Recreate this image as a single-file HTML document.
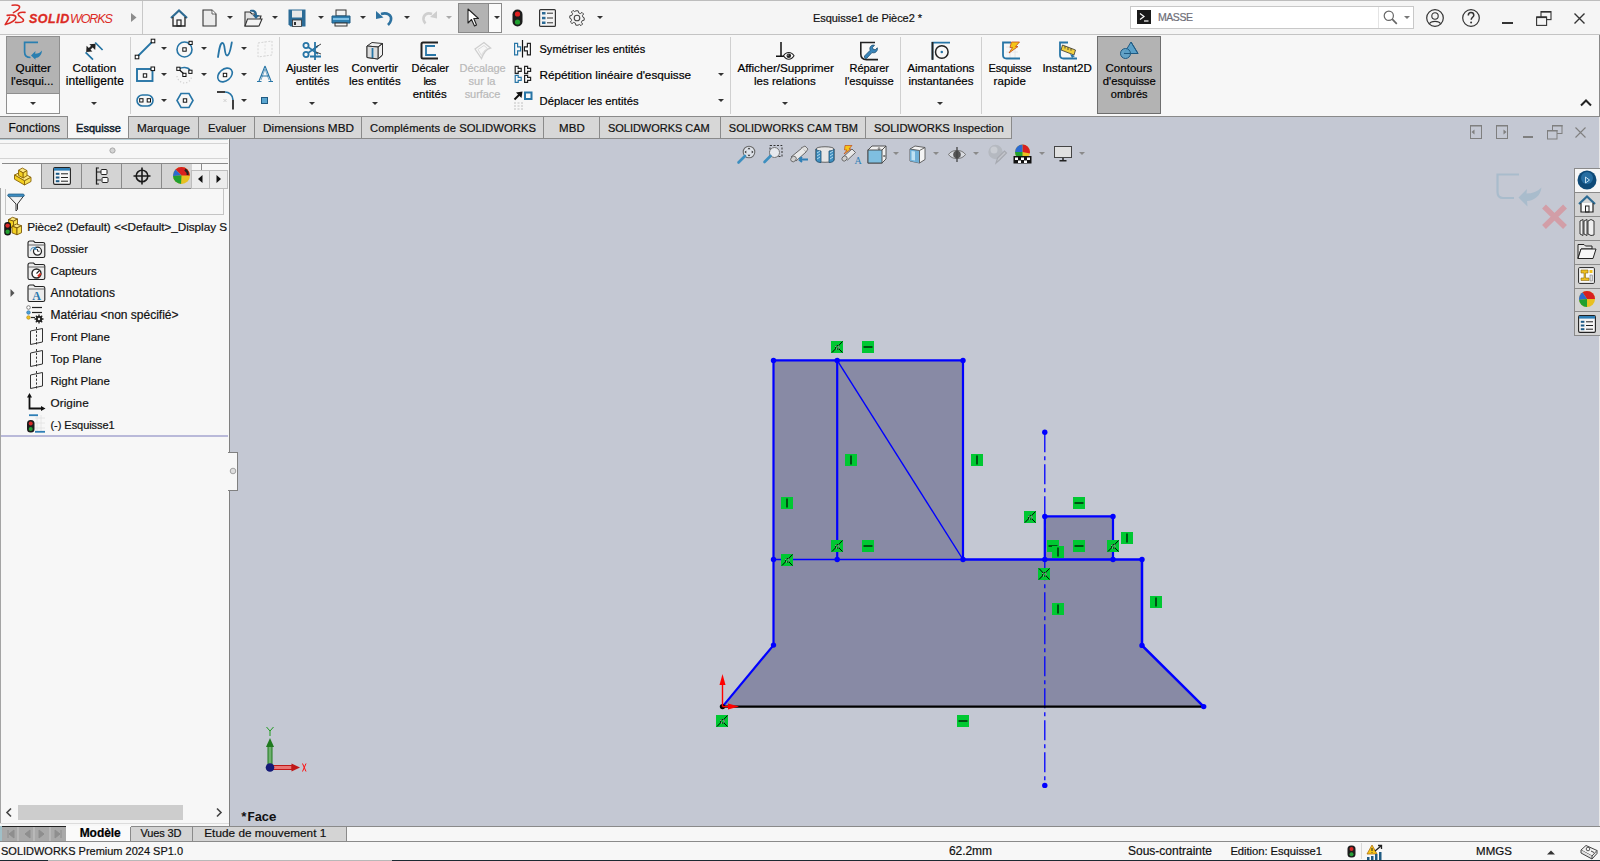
<!DOCTYPE html>
<html><head><meta charset="utf-8">
<style>
*{margin:0;padding:0;box-sizing:border-box}
html,body{width:1600px;height:861px;overflow:hidden;background:#f7f7f7;font-family:"Liberation Sans",sans-serif;font-size:12px;color:#000}
.a{position:absolute}
.t{position:absolute;white-space:nowrap;line-height:13px}
.c{text-align:center}
svg{position:absolute;overflow:visible}
.dd{position:absolute;width:0;height:0;border-left:3px solid transparent;border-right:3px solid transparent;border-top:3px solid #333}
.vs{position:absolute;width:1px;background:#c8c8c8}
.tab{position:absolute;top:116px;height:22px;background:#d7d7d7;border-left:1px solid #8a8a8a;border-right:1px solid #8a8a8a;border-top:1px solid #8a8a8a;line-height:20px;text-align:center;white-space:nowrap;color:#111}
.ft{position:absolute;left:50px;white-space:nowrap;line-height:14px;font-size:12px;color:#111}
.rel{position:absolute;width:12px;height:12px;background:#0fcc3a}
</style></head><body>

<!-- top border -->
<div class="a" style="left:0;top:0;width:1600px;height:1px;background:#bdbdbd"></div>
<!-- title bar -->
<div class="a" style="left:0;top:1px;width:1600px;height:33px;background:#f5f5f5"></div>
<div class="a" style="left:0;top:34px;width:1600px;height:1px;background:#c4c4c4"></div>
<div class="a" style="left:142px;top:1px;width:1px;height:33px;background:#c8c8c8"></div>

<!-- ribbon -->
<div class="a" style="left:0;top:35px;width:1600px;height:81px;background:#f7f7f7"></div>
<div class="a" style="left:0;top:116px;width:1600px;height:1px;background:#8a8a8a"></div>
<div class="a" style="left:1599px;top:35px;width:1px;height:82px;background:#8a8a8a"></div>

<!-- tab row background (viewport color) -->
<div class="a" style="left:0;top:117px;width:1600px;height:22px;background:#c4c8d3"></div>

<!-- left panel -->
<div class="a" style="left:0;top:139px;width:229px;height:687px;background:#f7f7f7"></div>
<div class="a" style="left:229px;top:139px;width:1px;height:687px;background:#808080"></div>

<!-- viewport -->
<div class="a" style="left:230px;top:139px;width:1369px;height:687px;background:#c4c8d3"></div>
<div class="a" style="left:1599px;top:117px;width:1px;height:709px;background:#e8e8e8"></div>

<!-- bottom tabs row -->
<div class="a" style="left:0;top:826px;width:1600px;height:16px;background:#f7f7f7"></div>
<div class="a" style="left:0;top:826px;width:1600px;height:1px;background:#8a8a8a"></div>
<div class="a" style="left:0;top:841px;width:1600px;height:1px;background:#8a8a8a"></div>
<!-- status bar -->
<div class="a" style="left:0;top:842px;width:1600px;height:18px;background:#f7f7f7"></div>
<div class="a" style="left:0;top:860px;width:1600px;height:1px;background:#1c2a32"></div><div class="a" style="left:48px;top:860px;width:344px;height:1px;background:#b8b8b8"></div>


<!-- ===== TITLE BAR CONTENT ===== -->
<svg style="left:0;top:0" width="30" height="30" viewBox="0 0 30 30">
 <path d="M12.2 5.3 C16 4.6 20.2 5.2 19.5 7.6 C19 9.6 16.3 11.2 13.4 12.6" fill="none" stroke="#dc2a24" stroke-width="1.6" stroke-linecap="round"/>
 <path d="M7.2 15.4 C11 14.6 16.2 14.8 15.8 17.6 C15.4 20.6 10 23.2 5.2 24.6 L9.6 17.4" fill="none" stroke="#dc2a24" stroke-width="1.6" stroke-linecap="round" stroke-linejoin="round"/>
 <path d="M25 12.4 C22 12.2 18 12.1 18.2 14.4 C18.5 17 23.8 18 23.5 20.5 C23.2 22.6 19 22.6 15.4 22.4" fill="none" stroke="#dc2a24" stroke-width="1.6" stroke-linecap="round"/>
</svg>
<div class="t" style="left:29px;top:11px;font-size:12.5px;line-height:16px;color:#dc2a24;font-weight:bold;font-style:italic;letter-spacing:0.5px;-webkit-text-stroke:0.3px #dc2a24">SOLID</div><div class="t" style="left:70px;top:11px;font-size:12.5px;line-height:16px;color:#dc2a24;font-style:italic;letter-spacing:-1.1px">WORKS</div>
<svg style="left:131px;top:13px" width="6" height="10"><path d="M0 0 L5.5 4.5 L0 9 Z" fill="#8c8c8c"/></svg>

<!-- home -->
<svg style="left:170px;top:9px" width="18" height="18" viewBox="0 0 18 18">
 <path d="M1 9 L9 1.5 L17 9" fill="none" stroke="#2d6b93" stroke-width="2.2" stroke-linejoin="miter"/>
 <path d="M3 8 L3 17 L15 17 L15 8" fill="none" stroke="#222" stroke-width="1.3"/>
 <rect x="7" y="11" width="4" height="6" fill="none" stroke="#222" stroke-width="1.2"/>
</svg>
<!-- new doc -->
<svg style="left:202px;top:9px" width="15" height="18" viewBox="0 0 15 18">
 <path d="M1 1 L10 1 L14 5 L14 17 L1 17 Z" fill="#ececec" stroke="#333" stroke-width="1.1"/>
 <path d="M10 1 L10 5 L14 5" fill="#fff" stroke="#555" stroke-width="0.9"/>
</svg>
<div class="dd" style="left:227px;top:16px"></div>
<!-- open -->
<svg style="left:244px;top:9px" width="19" height="18" viewBox="0 0 19 18">
 <path d="M1 3 L6 3 L8 5 L11 5 L11 7 L17 7 L14 17 L1 17 Z" fill="#e3e3e3" stroke="#333" stroke-width="1.1"/>
 <path d="M3.5 10 L18 10 L15 17 L1 17 Z" fill="#f4f4f4" stroke="#333" stroke-width="1.1"/>
 <path d="M6 1 C11 0 13 2 13 6 L15.5 6 L12 10 L8.5 6 L11 6 C11 3.5 9 2.5 6 2.5 Z" fill="#2b6790"/>
</svg>
<div class="dd" style="left:272px;top:16px"></div>
<!-- save -->
<svg style="left:288px;top:9px" width="18" height="18" viewBox="0 0 18 18">
 <path d="M0.5 0.5 L17.5 0.5 L17.5 17.5 L2.5 17.5 L0.5 15.5 Z" fill="#2b6b96"/>
 <rect x="4" y="1.5" width="10" height="7" fill="#e8e8e8"/>
 <rect x="4.5" y="11" width="9" height="6.5" fill="#e8e8e8" stroke="#333" stroke-width="0.8"/>
 <rect x="6" y="13" width="2" height="3" fill="#333"/>
</svg>
<div class="dd" style="left:318px;top:16px"></div>
<!-- print -->
<svg style="left:331px;top:9px" width="20" height="18" viewBox="0 0 20 18">
 <rect x="5" y="1" width="10" height="6" fill="#f2f2f2" stroke="#333" stroke-width="1"/>
 <path d="M1 7 L19 7 L19 14 L1 14 Z" fill="#2f7fb0" stroke="#1e5a82" stroke-width="1"/>
 <rect x="2" y="9" width="16" height="2" fill="#7fc0e6"/>
 <rect x="4" y="14" width="12" height="3" fill="#f2f2f2" stroke="#333" stroke-width="1"/>
</svg>
<div class="dd" style="left:360px;top:16px"></div>
<!-- undo -->
<svg style="left:375px;top:10px" width="19" height="16" viewBox="0 0 19 16">
 <path d="M6 4 C12 2 17 5 16 10 C15.5 12.5 14 14 13 15" fill="none" stroke="#2e72a0" stroke-width="2.6"/>
 <path d="M1 1 L1 9 L8.5 7.5 Z" fill="#2e72a0"/>
</svg>
<div class="dd" style="left:404px;top:16px"></div>
<!-- redo (disabled) -->
<svg style="left:421px;top:10px" width="17" height="15" viewBox="0 0 17 15">
 <path d="M11 4 C6 2 2 5 2.5 9.5 C2.8 11.5 3.5 12.5 4.5 13.5" fill="none" stroke="#cfcfcf" stroke-width="2.6"/>
 <path d="M16 1 L16 8.5 L9 7 Z" fill="#cfcfcf"/>
</svg>
<div class="dd" style="left:446px;top:16px;border-top-color:#aaa"></div>
<!-- select button -->
<div class="a" style="left:458px;top:3px;width:44px;height:30px;background:#fafafa;border:1px solid #8a8a8a"></div>
<div class="a" style="left:459px;top:4px;width:29px;height:28px;background:#b3b3b3"></div>
<div class="a" style="left:488px;top:4px;width:1px;height:28px;background:#8a8a8a"></div>
<svg style="left:467px;top:8px" width="13" height="19" viewBox="0 0 13 19">
 <path d="M1 1 L1 15 L4.5 11.5 L7.5 18 L9.5 17 L6.8 10.5 L11.5 10.5 Z" fill="#fff" stroke="#222" stroke-width="1.1" stroke-linejoin="round"/>
</svg>
<div class="dd" style="left:494px;top:16px"></div>
<!-- traffic light -->
<svg style="left:512px;top:9px" width="11" height="18" viewBox="0 0 11 18">
 <rect x="0.5" y="0.5" width="10" height="17" rx="5" fill="#1d1d1d"/>
 <circle cx="5.5" cy="5" r="2.6" fill="#e02020"/>
 <circle cx="5.5" cy="13" r="2.6" fill="#20a030"/>
</svg>
<!-- list -->
<svg style="left:539px;top:9px" width="17" height="18" viewBox="0 0 17 18">
 <rect x="0.6" y="0.6" width="15.8" height="16.8" rx="1" fill="#f4f4f4" stroke="#333" stroke-width="1.2"/>
 <rect x="3" y="3" width="3.5" height="2.5" fill="#2a6a96"/><rect x="3" y="7.8" width="3.5" height="2.5" fill="#2a6a96"/><rect x="3" y="12.5" width="3.5" height="2.5" fill="#2a6a96"/>
 <path d="M8 4.2 H14 M8 9 H14 M8 13.8 H14" stroke="#333" stroke-width="1"/>
</svg>
<!-- gear -->
<svg style="left:569px;top:10px" width="16" height="16" viewBox="0 0 16 16">
 <path d="M6.8 0.8 H9.2 L9.6 2.8 L11.3 3.6 L13 2.4 L14.6 4 L13.4 5.7 L14.1 7.4 L15.2 7.8 V10.2 L13.2 10.6 L12.4 12.3 L13.6 14 L12 15.6 L10.3 14.4 L9.2 15 V15.2 H6.8 L6.4 13.2 L4.7 12.4 L3 13.6 L1.4 12 L2.6 10.3 L1.9 8.6 L0.8 8.2 V5.8 L2.8 5.4 L3.6 3.7 L2.4 2 L4 0.4 L5.7 1.6 L6.8 1 Z" fill="#f4f4f4" stroke="#444" stroke-width="1"/>
 <circle cx="8" cy="8" r="2.8" fill="none" stroke="#444" stroke-width="1.1"/>
</svg>
<div class="dd" style="left:597px;top:16px"></div>


<!-- search -->
<div class="a" style="left:1130px;top:6px;width:284px;height:23px;background:#fff;border:1px solid #c8c8c8"></div>
<div class="a" style="left:1378px;top:7px;width:1px;height:21px;background:#e4e4e4"></div>
<div class="a" style="left:1137px;top:10px;width:14px;height:14px;background:#1a1a1a"></div>
<svg style="left:1139px;top:12px" width="11" height="11"><path d="M1 1.5 L5 4.5 L1 7.5" fill="none" stroke="#fff" stroke-width="1.2"/><path d="M5 9 H9.5" stroke="#fff" stroke-width="1.2"/></svg>
<svg style="left:1383px;top:10px" width="15" height="15" viewBox="0 0 15 15"><circle cx="5.8" cy="5.8" r="4.6" fill="none" stroke="#666" stroke-width="1.2"/><path d="M9.2 9.2 L13.8 13.8" stroke="#666" stroke-width="1.7"/></svg>
<div class="dd" style="left:1404px;top:16px;border-top-color:#777"></div>

<!-- account / help / window -->
<svg style="left:1426px;top:9px" width="18" height="18" viewBox="0 0 18 18"><circle cx="9" cy="9" r="8.3" fill="none" stroke="#333" stroke-width="1.2"/><circle cx="9" cy="7" r="3.2" fill="none" stroke="#333" stroke-width="1.1"/><path d="M3.5 14.8 C5 11.5 13 11.5 14.5 14.8" fill="none" stroke="#333" stroke-width="1.1"/></svg>
<svg style="left:1462px;top:9px" width="18" height="18" viewBox="0 0 18 18"><circle cx="9" cy="9" r="8.3" fill="none" stroke="#333" stroke-width="1.2"/><path d="M6.3 6.5 C6.3 4.3 7.7 3.6 9 3.6 C10.5 3.6 11.8 4.5 11.8 6.2 C11.8 8.2 9.2 8.5 9.2 10.8" fill="none" stroke="#333" stroke-width="1.5"/><circle cx="9.1" cy="13.5" r="1" fill="#333"/></svg>
<div class="a" style="left:1502px;top:22px;width:11px;height:2px;background:#333"></div>
<svg style="left:1536px;top:11px" width="16" height="15" viewBox="0 0 16 15"><rect x="5" y="0.6" width="10" height="8" fill="none" stroke="#333" stroke-width="1.1"/><rect x="5" y="0" width="10" height="1.6" fill="#333"/><rect x="0.6" y="6" width="10" height="8.4" fill="#f5f5f5" stroke="#333" stroke-width="1.1"/><rect x="0.6" y="5.5" width="10" height="1.6" fill="#333"/></svg>
<svg style="left:1574px;top:13px" width="11" height="11"><path d="M0.5 0.5 L10.5 10.5 M10.5 0.5 L0.5 10.5" stroke="#333" stroke-width="1.4"/></svg>


<!-- ===== RIBBON CONTENT ===== -->
<!-- Quitter -->
<div class="a" style="left:6px;top:36px;width:54px;height:78px;background:#fbfbfb;border:1px solid #8f8f8f"></div>
<div class="a" style="left:7px;top:37px;width:52px;height:57px;background:#b3b3b3;border-bottom:1px solid #8f8f8f"></div>
<svg style="left:0;top:0" width="120" height="70" viewBox="0 0 120 70">
 <path d="M38 42.3 H24.6 V52 C24.6 55.5 26.5 57.5 30.5 57.5" fill="none" stroke="#2a7fb0" stroke-width="1.7"/>
 <path d="M31 55.5 L35.5 51 L35.2 53.8 C38 53.8 40.5 52.5 42 50.5 C41.8 55 39 57.8 35.5 58 L35.5 59.8 Z" fill="#2a7fb0"/>
</svg>
<div class="dd" style="left:30px;top:102px"></div>

<!-- Cotation intelligente -->
<svg style="left:0;top:0" width="120" height="70" viewBox="0 0 120 70">
 <path d="M95.2 42.5 L102.6 50 M85.6 52.3 L93 59.7" stroke="#2272a2" stroke-width="1.7"/>
 <path d="M88.5 50 L93.5 45" stroke="#222" stroke-width="2.4"/>
 <path d="M86.2 52 L86.6 45.8 L92.4 51.6 Z" fill="#222"/>
 <path d="M95.6 43.8 L95.2 50 L89.4 44.2 Z" fill="#222"/>
</svg>
<div class="dd" style="left:91px;top:102px"></div>

<div class="a" style="left:130px;top:37px;width:1px;height:77px;background:#d0d0d0"></div>

<!-- sketch grid row1 -->
<svg style="left:0;top:0" width="300" height="120" viewBox="0 0 300 120">
 <path d="M137.5 56.5 L152.5 41.5" stroke="#2775a6" stroke-width="1.8"/>
 <rect x="135.2" y="55.2" width="3.6" height="3.6" fill="#fff" stroke="#111" stroke-width="1"/>
 <rect x="151.2" y="39.2" width="3.6" height="3.6" fill="#fff" stroke="#111" stroke-width="1"/>
</svg>
<div class="dd" style="left:161px;top:47px"></div>
<svg style="left:176px;top:40px" width="18" height="18" viewBox="0 0 18 18">
 <circle cx="8.5" cy="9.5" r="7.5" fill="none" stroke="#2775a6" stroke-width="1.6"/>
 <rect x="6.8" y="7.8" width="3.4" height="3.4" fill="#fff" stroke="#111" stroke-width="1"/>
 <rect x="13" y="1.3" width="3.2" height="3.2" fill="#fff" stroke="#111" stroke-width="1"/>
</svg>
<div class="dd" style="left:201px;top:47px"></div>
<svg style="left:216px;top:40px" width="18" height="18" viewBox="0 0 18 18">
 <path d="M2 17 C3 10 4 3 6.5 3 C9.5 3 8 15.5 11 15.5 C14 15.5 15 6 15.8 2.5" fill="none" stroke="#2775a6" stroke-width="1.8" stroke-linecap="round"/>
</svg>
<div class="dd" style="left:241px;top:47px"></div>
<svg style="left:257px;top:40px" width="17" height="18" viewBox="0 0 17 18">
 <path d="M1 3 L15 1 L15 15 L1 17 Z" fill="none" stroke="#d4d4d4" stroke-width="1" stroke-dasharray="2 1.5"/>
 <path d="M8 1 V17" stroke="#e0e0e0" stroke-width="1" stroke-dasharray="2 1.5"/>
</svg>
<!-- row2 -->
<svg style="left:0;top:0" width="300" height="120" viewBox="0 0 300 120">
 <rect x="137" y="69" width="15.5" height="12" fill="none" stroke="#2775a6" stroke-width="1.9"/>
 <rect x="143.3" y="73.8" width="3.4" height="3.4" fill="#fff" stroke="#111" stroke-width="1"/>
 <rect x="151" y="67" width="3.6" height="3.6" fill="#fff" stroke="#111" stroke-width="1"/>
</svg>
<div class="dd" style="left:161px;top:73px"></div>
<svg style="left:176px;top:66px" width="18" height="18" viewBox="0 0 18 18">
 <path d="M3 3 C6 0.8 12 0.8 14 4" fill="none" stroke="#2775a6" stroke-width="1.6"/>
 <path d="M1 10 C1.5 15 6 17 8.5 17 C12 17 15.5 14 15.5 10.5" fill="none" stroke="#d0d0d0" stroke-width="1.2" stroke-dasharray="1.2 2"/>
 <path d="M2.5 3 L8 8" stroke="#111" stroke-width="1.2"/>
 <rect x="0.8" y="1.2" width="3.2" height="3.2" fill="#fff" stroke="#111" stroke-width="1"/>
 <rect x="6.8" y="7.3" width="3.2" height="3.2" fill="#fff" stroke="#111" stroke-width="1"/>
 <rect x="12.8" y="4.2" width="3.2" height="3.2" fill="#fff" stroke="#111" stroke-width="1"/>
</svg>
<div class="dd" style="left:201px;top:73px"></div>
<svg style="left:216px;top:66px" width="18" height="18" viewBox="0 0 18 18">
 <ellipse cx="9" cy="9" rx="8.2" ry="5.8" transform="rotate(-40 9 9)" fill="none" stroke="#2775a6" stroke-width="1.6"/>
 <rect x="7.3" y="7.3" width="3.4" height="3.4" fill="#fff" stroke="#111" stroke-width="1"/>
</svg>
<div class="dd" style="left:241px;top:73px"></div>
<svg style="left:256px;top:65px" width="18" height="18" viewBox="0 0 18 18">
 <path d="M9 1 L3 16 M9 1 L15 16 M5.3 11 H12.7 M1 16.5 H5.5 M12.5 16.5 H17" fill="none" stroke="#2775a6" stroke-width="1.1"/>
 <path d="M9 4 L5 15 M9 4 L13 15" fill="none" stroke="#2775a6" stroke-width="0.6"/>
</svg>
<!-- row3 -->
<svg style="left:136px;top:93px" width="18" height="15" viewBox="0 0 18 15">
 <rect x="1" y="2" width="16" height="11" rx="5.5" fill="none" stroke="#2775a6" stroke-width="1.6"/>
 <rect x="3.7" y="5.7" width="3.3" height="3.3" fill="#fff" stroke="#111" stroke-width="1"/>
 <rect x="11.2" y="5.7" width="3.3" height="3.3" fill="#fff" stroke="#111" stroke-width="1"/>
</svg>
<div class="dd" style="left:161px;top:99px"></div>
<svg style="left:176px;top:92px" width="18" height="17" viewBox="0 0 18 17">
 <path d="M5 1.5 H13 L17 8.5 L13 15.5 H5 L1 8.5 Z" fill="none" stroke="#2775a6" stroke-width="1.6"/>
 <rect x="7.3" y="6.8" width="3.4" height="3.4" fill="#fff" stroke="#111" stroke-width="1"/>
</svg>
<svg style="left:216px;top:91px" width="18" height="19" viewBox="0 0 18 19">
 <path d="M1 1 H9" stroke="#111" stroke-width="1.6"/>
 <path d="M9 1 C13 1 17 4 17 9" fill="none" stroke="#2775a6" stroke-width="1.6"/>
 <path d="M17 9 V18.5" stroke="#111" stroke-width="1.6"/>
 <path d="M7.5 8 L10.5 11 M10.5 8 L7.5 11" stroke="#ccc" stroke-width="0.9"/>
</svg>
<div class="dd" style="left:241px;top:99px"></div>
<svg style="left:261px;top:97px" width="8" height="8" viewBox="0 0 8 8"><rect x="0.5" y="0.5" width="6" height="6" fill="#5aa6d0" stroke="#1f5a82" stroke-width="1"/></svg>

<div class="a" style="left:279px;top:37px;width:1px;height:77px;background:#d0d0d0"></div>

<!-- Ajuster -->
<svg style="left:302px;top:41px" width="20" height="20" viewBox="0 0 20 20">
 <circle cx="4" cy="4.5" r="2.6" fill="none" stroke="#2775a6" stroke-width="1.8"/>
 <circle cx="4" cy="13.5" r="2.6" fill="none" stroke="#2775a6" stroke-width="1.8"/>
 <path d="M6 6 L16 13 M6 12 L16 5" stroke="#2775a6" stroke-width="1.6"/>
 <path d="M13 1 V19 M8 15.5 H19" stroke="#2775a6" stroke-width="1.8"/>
 <path d="M14 6 L19 3 M14 11 L19 13" stroke="#444" stroke-width="1"/>
</svg>
<div class="dd" style="left:309px;top:102px"></div>
<!-- Convertir -->
<svg style="left:366px;top:41px" width="18" height="19" viewBox="0 0 18 19">
 <path d="M1 5 L6 1.5 L16.5 2.5 L16.5 14 L12 18 L1 16.5 Z" fill="#f0f0f0" stroke="#333" stroke-width="1"/>
 <path d="M1 5 L12 6 L16.5 2.5 M12 6 V18" fill="none" stroke="#333" stroke-width="1"/>
 <path d="M1 5 L12 6 L12 18 L1 16.5 Z" fill="#dcdcdc"/>
 <path d="M6.5 7 V17" stroke="#2775a6" stroke-width="1.8"/>
 <path d="M1 5 L12 6 L16.5 2.5 M12 6 V18 M1 5 V16.5 L12 18 L16.5 14 V2.5" fill="none" stroke="#333" stroke-width="1"/>
</svg>
<div class="dd" style="left:372px;top:102px"></div>
<!-- Décaler -->
<svg style="left:420px;top:41px" width="20" height="19" viewBox="0 0 20 19">
 <path d="M18 1.5 H3 C2 1.5 1.5 2 1.5 3 V16 C1.5 17 2 17.5 3 17.5 H18" fill="none" stroke="#222" stroke-width="2"/>
 <path d="M15 5 H6 V14 H16" fill="none" stroke="#2775a6" stroke-width="1.8"/>
</svg>
<!-- Décalage surface disabled -->
<svg style="left:473px;top:41px" width="19" height="19" viewBox="0 0 19 19">
 <path d="M2 8 L11 1.5 L17.5 7 C13 8 10.5 12 8.5 17.5 Z" fill="none" stroke="#cfcfcf" stroke-width="1.3"/>
 <path d="M5 8.5 L11 4.5 L14.5 7.5 C11.5 9 9.5 11.5 8.5 14.5 Z" fill="none" stroke="#dcdcdc" stroke-width="1"/>
</svg>

<!-- Symétriser etc -->


<svg style="left:0;top:0" width="560" height="120" viewBox="0 0 560 120">
 <path d="M514.6 43.4 H517.6 V46.9 H520.6 V50.9 H517.6 V54.9 H514.6 Z" fill="#fafafa" stroke="#2775a6" stroke-width="1.2"/>
 <path d="M522.5 40 V57.5" stroke="#111" stroke-width="1.2"/>
 <path d="M530.4 43.4 H527.4 V46.9 H524.4 V50.9 H527.4 V54.9 H530.4 Z" fill="#fafafa" stroke="#222" stroke-width="1.2"/>
 <path d="M515.2 66.3 H518.2 V68.3 H521.2 V71.3 H518.2 V73.3 H515.2 Z" fill="#fafafa" stroke="#222" stroke-width="1.2"/><path d="M524.6 66.3 H527.6 V68.3 H530.6 V71.3 H527.6 V73.3 H524.6 Z" fill="#fafafa" stroke="#222" stroke-width="1.2"/><path d="M515.2 75.3 H518.2 V77.3 H521.2 V80.3 H518.2 V82.3 H515.2 Z" fill="#fafafa" stroke="#2775a6" stroke-width="1.2"/><path d="M524.6 75.3 H527.6 V77.3 H530.6 V80.3 H527.6 V82.3 H524.6 Z" fill="#fafafa" stroke="#222" stroke-width="1.2"/>
 <path d="M514.5 99.5 L520 94" stroke="#111" stroke-width="2"/><path d="M522.5 91.5 L516 92.5 L521.5 98 Z" fill="#111"/>
 <rect x="525" y="92.5" width="6.5" height="6.5" fill="#fafafa" stroke="#2775a6" stroke-width="2"/>
 <g fill="#dcdcdc"><rect x="514" y="102" width="2" height="2"/><rect x="517.5" y="102" width="2" height="2"/><rect x="521" y="102" width="2" height="2"/>
 <rect x="514" y="105" width="2" height="2"/><rect x="517.5" y="105" width="2" height="2"/><rect x="521" y="105" width="2" height="2"/>
 <rect x="514" y="108" width="2" height="2"/><rect x="517.5" y="108" width="2" height="2"/><rect x="521" y="108" width="2" height="2"/></g>
</svg>
<div class="dd" style="left:718px;top:73px"></div>

<div class="dd" style="left:718px;top:99px"></div>

<div class="a" style="left:730px;top:37px;width:1px;height:77px;background:#d0d0d0"></div>

<!-- Afficher/Supprimer -->

<svg style="left:0;top:0" width="1000" height="70" viewBox="0 0 1000 70">
 <path d="M781 42 V56.2 M776 56.2 H784" stroke="#111" stroke-width="1.5"/>
 <path d="M783.5 55.8 C786 51.3 791.5 51.3 794 55.8 C791.5 60.3 786 60.3 783.5 55.8 Z" fill="#fff" stroke="#222" stroke-width="1.1"/>
 <circle cx="788.8" cy="55.8" r="2.3" fill="#222"/><circle cx="788" cy="55" r="0.6" fill="#fff"/>
 <path d="M875 42.5 H860.8 V54 C860.8 57.5 863 59.6 866.5 59.6 H878" fill="none" stroke="#222" stroke-width="1.6"/>
 <path d="M864.5 56 L870.2 50.3 C869 47.5 871 44.5 874.5 45.2 L872.5 47.5 L873.2 49.3 L875.2 49.8 L877.3 47.8 C878 51.3 875 53.6 872 52.6 L866.8 58.2 C866 59 864 58.5 864.5 56 Z" fill="#3a86ba" stroke="#1d4f72" stroke-width="0.8"/>
 <path d="M932.5 59.8 V42.6 H950" fill="none" stroke="#2775a6" stroke-width="1.8"/>
 <path d="M932.5 42 V59.8" stroke="#222" stroke-width="1.8"/>
 <circle cx="941.8" cy="52" r="6.3" fill="none" stroke="#222" stroke-width="1.5"/>
 <circle cx="941.8" cy="52" r="1.3" fill="#2775a6"/>
</svg>
<div class="dd" style="left:782px;top:102px"></div>
<!-- Réparer -->


<div class="a" style="left:900px;top:37px;width:1px;height:77px;background:#d0d0d0"></div>
<!-- Aimantations -->

<div class="dd" style="left:937px;top:102px"></div>

<div class="a" style="left:981px;top:37px;width:1px;height:77px;background:#d0d0d0"></div>
<!-- Esquisse rapide -->
<svg style="left:1001px;top:41px" width="20" height="20" viewBox="0 0 20 20">
 <path d="M5 6 H17 M5 11 H17 M9 3 V17 M14 3 V17" stroke="#e2e2e2" stroke-width="0.8"/>
 <path d="M10 1.5 H2 V14 C2 16.5 3.5 17.5 5.5 17.5 H19" fill="none" stroke="#2775a6" stroke-width="1.8"/>
 <path d="M10.5 1 H18.5 L14.5 5.5 H17 L8 12 L11.5 6.5 H9 Z" fill="#f5c518" stroke="#c24a1a" stroke-width="0.8"/>
</svg>
<!-- Instant2D -->
<svg style="left:1058px;top:41px" width="20" height="20" viewBox="0 0 20 20">
 <path d="M10 1.5 H2 V14 C2 16.5 3.5 17.5 5.5 17.5 H19" fill="none" stroke="#2775a6" stroke-width="1.8"/>
 <path d="M4.5 4 L17.5 9 L16 14 L3 9 Z" fill="#f0d040" stroke="#333" stroke-width="0.8"/>
 <path d="M7 5 V7.5 M10 6.2 V9 M13 7.3 V9.7" stroke="#333" stroke-width="0.8"/>
 <path d="M12 13 L17 15 L14 17 Z" fill="#2775a6"/>
</svg>
<!-- Contours -->
<div class="a" style="left:1097px;top:36px;width:64px;height:78px;background:#b3b3b3;border:1px solid #6e6e6e"></div>
<svg style="left:1120px;top:41px" width="19" height="19" viewBox="0 0 19 19">
 <path d="M11 1 L18 12.5 H4 Z" fill="#5aa0c8" stroke="#1f5a82" stroke-width="1"/>
 <circle cx="5.5" cy="12.5" r="5" fill="#5aa0c8" stroke="#1f5a82" stroke-width="1" fill-opacity="0.9"/>
 <path d="M4 12.5 H18 L11 1" fill="none" stroke="#1f5a82" stroke-width="1"/>
</svg>

<!-- collapse caret -->
<svg style="left:1580px;top:99px" width="12" height="8"><path d="M1 6.5 L6 1.5 L11 6.5" fill="none" stroke="#222" stroke-width="2"/></svg>


<!-- ===== COMMAND MANAGER TABS ===== -->
<div class="tab" style="left:0;width:68px;border-left:none"></div>
<div class="tab" style="left:67px;width:62px;background:#f7f7f7;height:22px;border-top:none"></div>
<div class="tab" style="left:128px;width:71px"></div>
<div class="tab" style="left:198px;width:57px"></div>
<div class="tab" style="left:254px;width:108px"></div>
<div class="tab" style="left:361px;width:183px"></div>
<div class="tab" style="left:543px;width:57px"></div>
<div class="tab" style="left:599px;width:122px"></div>
<div class="tab" style="left:720px;width:146px"></div>
<div class="tab" style="left:865px;width:147px"></div>
<div class="a" style="left:0;top:138px;width:1012px;height:1px;background:#8a8a8a"></div>


<!-- viewport window buttons -->
<svg style="left:1470px;top:125px" width="13" height="14" viewBox="0 0 13 14"><rect x="0.5" y="0.5" width="11" height="13" fill="none" stroke="#7f7f7f" stroke-width="1"/><rect x="0" y="0" width="12" height="1.5" fill="#7f7f7f"/><path d="M1.5 7 L4.5 4.5 V9.5 Z" fill="#7f7f7f"/></svg>
<svg style="left:1496px;top:125px" width="13" height="14" viewBox="0 0 13 14"><rect x="0.5" y="0.5" width="11" height="13" fill="none" stroke="#7f7f7f" stroke-width="1"/><rect x="0" y="0" width="12" height="1.5" fill="#7f7f7f"/><path d="M10.5 7 L7.5 4.5 V9.5 Z" fill="#7f7f7f"/></svg>
<div class="a" style="left:1523px;top:136px;width:10px;height:2px;background:#7f7f7f"></div>
<svg style="left:1547px;top:125px" width="16" height="15" viewBox="0 0 16 15"><rect x="5.5" y="0.5" width="9.5" height="8" fill="none" stroke="#7f7f7f" stroke-width="1"/><rect x="5" y="0" width="10.5" height="1.5" fill="#7f7f7f"/><rect x="0.5" y="5.5" width="9.5" height="8.5" fill="#c4c8d3" stroke="#7f7f7f" stroke-width="1"/><rect x="0" y="5" width="10.5" height="1.5" fill="#7f7f7f"/></svg>
<svg style="left:1575px;top:127px" width="11" height="11"><path d="M0.5 0.5 L10.5 10.5 M10.5 0.5 L0.5 10.5" stroke="#7f7f7f" stroke-width="1.1"/></svg>

<!-- ===== LEFT PANEL ===== -->
<div class="a" style="left:0;top:139px;width:228px;height:1px;background:#b6ccd4"></div>
<div class="a" style="left:0;top:143px;width:228px;height:1px;background:#d4d4d4"></div>
<div class="a" style="left:0;top:158px;width:228px;height:1px;background:#d4d4d4"></div>
<svg style="left:109px;top:147px" width="7" height="7"><circle cx="3.5" cy="3.5" r="2.6" fill="#d4d4d4" stroke="#a0a0a0" stroke-width="0.9"/></svg>
<!-- panel tabs -->
<div class="a" style="left:2px;top:163px;width:226px;height:1px;background:#8a8a8a"></div>
<div class="a" style="left:42px;top:164px;width:150px;height:24px;background:#d4d4d4"></div>
<div class="a" style="left:41px;top:164px;width:1px;height:24px;background:#8a8a8a"></div>
<div class="a" style="left:81px;top:164px;width:1px;height:24px;background:#8a8a8a"></div>
<div class="a" style="left:121px;top:164px;width:1px;height:24px;background:#8a8a8a"></div>
<div class="a" style="left:161px;top:164px;width:1px;height:24px;background:#8a8a8a"></div>
<div class="a" style="left:201px;top:164px;width:1px;height:6px;background:#8a8a8a"></div>
<div class="a" style="left:41px;top:188px;width:187px;height:1px;background:#8a8a8a"></div>
<div class="a" style="left:191px;top:170px;width:37px;height:19px;background:#ececec;border:1px solid #bdbdbd"></div>
<div class="a" style="left:209px;top:170px;width:1px;height:19px;background:#bdbdbd"></div>
<svg style="left:198px;top:175px" width="5" height="8"><path d="M4.5 0 V8 L0 4 Z" fill="#111"/></svg>
<svg style="left:216px;top:175px" width="5" height="8"><path d="M0.5 0 V8 L5 4 Z" fill="#111"/></svg>
<!-- tab icons -->
<svg style="left:0;top:160px" width="40" height="30" viewBox="0 160 40 30">
 <g stroke="#8a6408" stroke-width="0.9" stroke-linejoin="round">
 <path d="M14.5 175 L21 171.8 L31 177.3 L24.5 180.8 Z" fill="#fbe680"/>
 <path d="M14.5 175 L24.5 180.8 V185 L14.5 179.2 Z" fill="#f3cf20"/>
 <path d="M24.5 180.8 L31 177.3 V181.5 L24.5 185 Z" fill="#f7df50"/>
 <path d="M18.5 170.3 L22.3 168 L27 170.6 L23.2 172.9 Z" fill="#fbe680"/>
 <path d="M18.5 170.3 L23.2 172.9 V178 L18.5 175.4 Z" fill="#f3cf20"/>
 <path d="M23.2 172.9 L27 170.6 V175.7 L23.2 178 Z" fill="#f7df50"/>
 </g>
</svg>
<svg style="left:53px;top:167px" width="18" height="18" viewBox="0 0 18 18">
 <rect x="0.6" y="0.6" width="16.8" height="16.8" rx="1.3" fill="#f6f6f6" stroke="#222" stroke-width="1.1"/>
 <rect x="1" y="1" width="16" height="2.6" fill="#2f7fb6"/>
 <rect x="2.8" y="5.8" width="3.6" height="2" fill="#1c5a86"/><rect x="2.8" y="9.5" width="3.6" height="2" fill="#1c5a86"/><rect x="2.8" y="13.2" width="3.6" height="2" fill="#1c5a86"/>
 <path d="M8 6.8 H15 M8 10.5 H15 M8 14.2 H15" stroke="#222" stroke-width="1"/>
</svg>
<svg style="left:95px;top:167px" width="14" height="18" viewBox="0 0 14 18">
 <path d="M1.5 0.5 V17.5" stroke="#222" stroke-width="1.3"/><path d="M1.5 1 H4 M1.5 17 H4 M1.5 5 H6 M1.5 13 H6" stroke="#222" stroke-width="1"/>
 <rect x="6" y="2.5" width="6" height="5" rx="1" fill="#fafafa" stroke="#222" stroke-width="1"/>
 <rect x="7" y="10.5" width="6" height="5" rx="1" fill="#fafafa" stroke="#222" stroke-width="1"/>
</svg>
<svg style="left:133px;top:167px" width="18" height="18" viewBox="0 0 18 18">
 <circle cx="9" cy="9" r="5.8" fill="none" stroke="#1a1a1a" stroke-width="1.6"/>
 <path d="M9 0.5 V17.5 M0.5 9 H17.5" stroke="#1a1a1a" stroke-width="1.6"/>
</svg>
<svg style="left:172px;top:166px" width="19" height="19" viewBox="0 0 19 19">
 <defs><clipPath id="cp1"><circle cx="9.5" cy="9.5" r="8.5"/></clipPath></defs>
 <g clip-path="url(#cp1)">
 <rect x="0" y="0" width="19" height="19" fill="#e8c020"/>
 <path d="M9.5 9.5 L0 0 H19 V9.5 Z" fill="#d82020"/>
 <path d="M9.5 9.5 L0 0 V10 Z" fill="#2a6ad0"/>
 <path d="M9.5 9.5 L0 10 V19 H9 Z" fill="#20a030"/>
 </g>
 <path d="M13 3.5 C15 5 16 7 15.5 9" stroke="#222" stroke-width="2.2" fill="none"/>
</svg>
<!-- filter box -->
<div class="a" style="left:5px;top:189px;width:219px;height:26px;background:#f7f7f7;border:1px solid #c4c4c4;border-top:none"></div>
<svg style="left:7px;top:193px" width="18" height="19" viewBox="0 0 18 19">
 <path d="M1 2.5 L9 11 V18 L10.5 16.5 V11 L17 2.5" fill="#f3f3f3" stroke="#333" stroke-width="1"/>
 <rect x="0.8" y="1" width="16.4" height="2.6" rx="1.2" fill="#3d8cc0" stroke="#1e5a82" stroke-width="0.7"/>
</svg>

<!-- tree -->
<svg style="left:0;top:210px" width="26" height="30" viewBox="0 210 26 30">
 <g stroke="#7a5808" stroke-width="0.9" stroke-linejoin="round">
 <path d="M8.5 219.5 L12.5 217.3 L17.5 219 L13.5 221.2 Z" fill="#fbe680"/>
 <path d="M8.5 219.5 L13.5 221.2 V228.5 L8.5 226.5 Z" fill="#f3cf20"/>
 <path d="M13.5 221.2 L17.5 219 V226.5 L13.5 228.5 Z" fill="#f7df50"/>
 <path d="M12 226.2 L16.5 224 L21.5 225.7 L17 227.9 Z" fill="#fbe680"/>
 <path d="M12 226.2 L17 227.9 V234.8 L12 232.8 Z" fill="#f3cf20"/>
 <path d="M17 227.9 L21.5 225.7 V232.7 L17 234.8 Z" fill="#f7df50"/>
 </g>
 <rect x="4.2" y="222" width="6.8" height="13.5" rx="3.3" fill="#161616"/>
 <circle cx="7.6" cy="225.6" r="2.2" fill="#d82828"/><circle cx="7.6" cy="231.7" r="2.2" fill="#22a030"/>
</svg>
<svg style="left:27px;top:240px" width="19" height="18" viewBox="0 0 19 18">
 <path d="M1 3 C1 1.5 2 1 3 1 H6.5 L8 2.5 H16 C17 2.5 17.8 3 17.8 4 V16 C17.8 17 17 17.5 16 17.5 H2.5 C1.5 17.5 1 17 1 16 Z" fill="#ececec" stroke="#222" stroke-width="1.1"/>
 <path d="M1 5 H17.8" stroke="#555" stroke-width="0.9"/><circle cx="10.5" cy="11.2" r="4" fill="#fff" stroke="#222" stroke-width="1.2"/><path d="M10.5 9 V11.2 H12.5" stroke="#222" stroke-width="0.9" fill="none"/><path d="M4 11 C4 8.5 6 7.5 7.5 8 L6.5 9.5 L10 10 L8.5 6.5 L7.5 7.5 C6 6.5 3 8 3.5 11.5 Z" fill="#2f7fb6"/></svg>
<svg style="left:27px;top:262px" width="19" height="18" viewBox="0 0 19 18">
 <path d="M1 3 C1 1.5 2 1 3 1 H6.5 L8 2.5 H16 C17 2.5 17.8 3 17.8 4 V16 C17.8 17 17 17.5 16 17.5 H2.5 C1.5 17.5 1 17 1 16 Z" fill="#ececec" stroke="#222" stroke-width="1.1"/>
 <path d="M1 5 H17.8" stroke="#555" stroke-width="0.9"/><circle cx="9.5" cy="11.5" r="4.5" fill="#fff" stroke="#222" stroke-width="1.4"/><path d="M9.5 11.5 L12.5 8.5" stroke="#222" stroke-width="1.1"/><path d="M11 14.5 L13.8 11.5" stroke="#e03020" stroke-width="2"/></svg>
<svg style="left:10px;top:289px" width="5" height="8"><path d="M0.5 0 V8 L4.5 4 Z" fill="#555"/></svg>
<svg style="left:27px;top:284px" width="19" height="18" viewBox="0 0 19 18">
 <path d="M1 3 C1 1.5 2 1 3 1 H6.5 L8 2.5 H16 C17 2.5 17.8 3 17.8 4 V16 C17.8 17 17 17.5 16 17.5 H2.5 C1.5 17.5 1 17 1 16 Z" fill="#ececec" stroke="#222" stroke-width="1.1"/>
 <path d="M1 5 H17.8" stroke="#555" stroke-width="0.9"/><text x="9.5" y="16" text-anchor="middle" font-family="Liberation Serif" font-weight="bold" font-size="12" fill="#2a78ad">A</text></svg>
<svg style="left:26px;top:305px" width="19" height="19" viewBox="0 0 19 19">
 <circle cx="2.5" cy="2.5" r="1.8" fill="#fff" stroke="#666" stroke-width="0.8"/><path d="M6 2.5 H16" stroke="#222" stroke-width="1.2"/>
 <circle cx="2.5" cy="7.5" r="1.8" fill="#4aa0d8" stroke="#2a6a96" stroke-width="0.6"/><path d="M6 7.5 H16" stroke="#222" stroke-width="1.2"/>
 <circle cx="2.5" cy="12.5" r="1.8" fill="#f0c020" stroke="#a88314" stroke-width="0.6"/><path d="M5 12.5 H9" stroke="#222" stroke-width="1.2"/>
 <circle cx="13" cy="14" r="3.2" fill="#222"/><circle cx="13" cy="14" r="1.2" fill="#f7f7f7"/>
 <path d="M13 9.5 V18.5 M8.5 14 H17.5 M9.8 10.8 L16.2 17.2 M16.2 10.8 L9.8 17.2" stroke="#222" stroke-width="1.3"/>
 <circle cx="13" cy="14" r="1.2" fill="#f7f7f7"/>
</svg>
<svg style="left:29px;top:327px" width="16" height="19" viewBox="0 0 16 19"><path d="M1.5 4 L13.5 1.5 V15 L1.5 17.5 Z" fill="none" stroke="#333" stroke-width="1"/><path d="M7.5 0 V19" stroke="#333" stroke-width="1" stroke-dasharray="2.2 1.6"/></svg>
<svg style="left:29px;top:349px" width="16" height="19" viewBox="0 0 16 19"><path d="M1.5 4 L13.5 1.5 V15 L1.5 17.5 Z" fill="none" stroke="#333" stroke-width="1"/><path d="M7.5 0 V19" stroke="#333" stroke-width="1" stroke-dasharray="2.2 1.6"/></svg>
<svg style="left:29px;top:371px" width="16" height="19" viewBox="0 0 16 19"><path d="M1.5 4 L13.5 1.5 V15 L1.5 17.5 Z" fill="none" stroke="#333" stroke-width="1"/><path d="M7.5 0 V19" stroke="#333" stroke-width="1" stroke-dasharray="2.2 1.6"/></svg>
<svg style="left:27px;top:393px" width="19" height="18" viewBox="0 0 19 18"><path d="M2.5 3 V15.5 H15" fill="none" stroke="#111" stroke-width="1.8"/><path d="M2.5 0 L0 4.5 H5 Z M18.5 15.5 L14 13 V18 Z" fill="#111"/></svg>
<svg style="left:26px;top:414px" width="20" height="19" viewBox="0 0 20 19">
 <path d="M9 4 H19 M9 9 H19 M9 14 H19 M11 1 V18 M15 1 V18" stroke="#e2e2e2" stroke-width="0.8"/>
 <path d="M3 1.2 H12" stroke="#2f7fb6" stroke-width="1.8"/><path d="M9 17.8 H19" stroke="#2f7fb6" stroke-width="1.8"/>
 <rect x="1" y="6" width="7.5" height="12.5" rx="3.5" fill="#1d1d1d"/>
 <circle cx="4.7" cy="9.6" r="2" fill="#d82828"/><circle cx="4.7" cy="15" r="2" fill="#28a038"/>
</svg>
<div class="a" style="left:0;top:435px;width:228px;height:2px;background:#b9b9d9"></div>

<!-- panel splitter handle -->
<div class="a" style="left:228px;top:452px;width:10px;height:39px;background:#f7f7f7;border:1px solid #808080;border-left:none"></div>
<svg style="left:229px;top:467px" width="8" height="8"><circle cx="4" cy="4" r="2.8" fill="#dedede" stroke="#9a9a9a" stroke-width="0.9"/></svg>

<!-- left scrollbar -->
<div class="a" style="left:0;top:188px;width:1px;height:635px;background:#a4a4a4"></div>
<div class="a" style="left:18px;top:805px;width:165px;height:15px;background:#cdcdcd"></div>
<svg style="left:6px;top:808px" width="6" height="9"><path d="M5 0.5 L1 4.5 L5 8.5" fill="none" stroke="#444" stroke-width="1.6"/></svg>
<svg style="left:216px;top:808px" width="6" height="9"><path d="M1 0.5 L5 4.5 L1 8.5" fill="none" stroke="#444" stroke-width="1.6"/></svg>
<div class="a" style="left:0;top:823px;width:229px;height:1px;background:#dcdcdc"></div>



<!-- ===== SKETCH ===== -->
<svg style="left:0;top:0" width="1600" height="861" viewBox="0 0 1600 861">
 <path d="M722.5 706.6 L773.5 645.1 L773.5 360.4 L963.0 360.4 L963.0 559.5 L1044.8 559.5 L1044.8 516.4 L1113.0 516.4 L1113.0 559.5 L1142.0 559.5 L1142.0 645.4 L1203.7 706.6 Z" fill="#888aa5"/>
 <g stroke="#0000ff" stroke-width="2.2" fill="none" stroke-linecap="butt">
  <path d="M722.5 706.6 L773.5 645.1 L773.5 360.4 L963.0 360.4 L963.0 559.5"/>
  <path d="M963.0 559.5 L1142.0 559.5 L1142.0 645.4 L1203.7 706.6" stroke-width="2.5"/>
  <path d="M773.5 559.5 L963 559.5" stroke-width="1.6"/>
  <path d="M837.2 360.4 L837.2 559.5"/>
  <path d="M1044.8 559.5 L1044.8 516.4 L1113.0 516.4 L1113.0 559.5"/>
 </g>
 <path d="M837.2 360.4 L963.0 559.5" stroke="#0000ff" stroke-width="1.4"/>
 <path d="M1044.8 432.2 V785.4" stroke="#0000ff" stroke-width="1.3" stroke-dasharray="20 4 4 4" stroke-dashoffset="0"/>
 <path d="M722.5 706.6 L1203.7 706.6" stroke="#000" stroke-width="2.4"/>
 <circle cx="773.5" cy="360.4" r="2.7" fill="#0000ff"/><circle cx="837.2" cy="360.4" r="2.7" fill="#0000ff"/><circle cx="963.0" cy="360.4" r="2.7" fill="#0000ff"/><circle cx="773.5" cy="559.5" r="2.7" fill="#0000ff"/><circle cx="837.2" cy="559.5" r="2.7" fill="#0000ff"/><circle cx="963.0" cy="559.5" r="2.7" fill="#0000ff"/><circle cx="1044.8" cy="559.5" r="2.7" fill="#0000ff"/><circle cx="1044.8" cy="516.4" r="2.7" fill="#0000ff"/><circle cx="1113.0" cy="516.4" r="2.7" fill="#0000ff"/><circle cx="1113.0" cy="559.5" r="2.7" fill="#0000ff"/><circle cx="1142.0" cy="559.5" r="2.7" fill="#0000ff"/><circle cx="1142.0" cy="645.4" r="2.7" fill="#0000ff"/><circle cx="1203.7" cy="706.6" r="2.7" fill="#0000ff"/><circle cx="773.5" cy="645.1" r="2.7" fill="#0000ff"/><circle cx="1044.8" cy="432.2" r="2.7" fill="#0000ff"/><circle cx="1044.8" cy="785.4" r="2.7" fill="#0000ff"/>
 <circle cx="722.5" cy="706.6" r="2.7" fill="#000"/>
 <path d="M722.5 706.6 V684" stroke="#ff0000" stroke-width="1.4"/>
 <path d="M722.5 674 L719.5 685 H725.5 Z" fill="#ff0000"/>
 <path d="M722.5 706.6 H729" stroke="#ff0000" stroke-width="1.4"/>
 <path d="M739 706.6 L728 703.6 V709.6 Z" fill="#ff0000"/>
 <rect x="831" y="341" width="12" height="12" fill="#00c832"/><path d="M832 352.5 L842.5 341.5 M837.5 347.5 L842.5 352.5" stroke="#000" stroke-width="0.95"/><circle cx="837.3" cy="347.3" r="1.8" fill="#00c832" stroke="#000" stroke-width="1"/><circle cx="837.3" cy="347.3" r="1.8" fill="none" stroke="#fff" stroke-width="1" stroke-dasharray="1.1 1.7"/><rect x="862" y="341" width="12" height="12" fill="#00c832"/><path d="M863.5 347 H872.5" stroke="#000" stroke-width="1.2"/><rect x="845" y="454" width="12" height="12" fill="#00c832"/><path d="M851 455.5 V464.5" stroke="#000" stroke-width="1.2"/><rect x="971" y="454" width="12" height="12" fill="#00c832"/><path d="M977 455.5 V464.5" stroke="#000" stroke-width="1.2"/><rect x="781" y="497" width="12" height="12" fill="#00c832"/><path d="M787 498.5 V507.5" stroke="#000" stroke-width="1.2"/><rect x="831" y="540" width="12" height="12" fill="#00c832"/><path d="M832 551.5 L842.5 540.5 M837.5 546.5 L842.5 551.5" stroke="#000" stroke-width="0.95"/><circle cx="837.3" cy="546.3" r="1.8" fill="#00c832" stroke="#000" stroke-width="1"/><circle cx="837.3" cy="546.3" r="1.8" fill="none" stroke="#fff" stroke-width="1" stroke-dasharray="1.1 1.7"/><rect x="862" y="540" width="12" height="12" fill="#00c832"/><path d="M863.5 546 H872.5" stroke="#000" stroke-width="1.2"/><rect x="781" y="554" width="12" height="12" fill="#00c832"/><path d="M782 565.5 L792.5 554.5 M787.5 560.5 L792.5 565.5" stroke="#000" stroke-width="0.95"/><circle cx="787.3" cy="560.3" r="1.8" fill="#00c832" stroke="#000" stroke-width="1"/><circle cx="787.3" cy="560.3" r="1.8" fill="none" stroke="#fff" stroke-width="1" stroke-dasharray="1.1 1.7"/><rect x="1073" y="497" width="12" height="12" fill="#00c832"/><path d="M1074.5 503 H1083.5" stroke="#000" stroke-width="1.2"/><rect x="1024" y="511" width="12" height="12" fill="#00c832"/><path d="M1025 522.5 L1035.5 511.5 M1030.5 517.5 L1035.5 522.5" stroke="#000" stroke-width="0.95"/><circle cx="1030.3" cy="517.3" r="1.8" fill="#00c832" stroke="#000" stroke-width="1"/><circle cx="1030.3" cy="517.3" r="1.8" fill="none" stroke="#fff" stroke-width="1" stroke-dasharray="1.1 1.7"/><rect x="1047" y="540" width="12" height="12" fill="#00c832"/><path d="M1048.5 546 H1057.5" stroke="#000" stroke-width="1.2"/><rect x="1052" y="546" width="12" height="12" fill="#00c832"/><path d="M1058 547.5 V556.5" stroke="#000" stroke-width="1.2"/><rect x="1073" y="540" width="12" height="12" fill="#00c832"/><path d="M1074.5 546 H1083.5" stroke="#000" stroke-width="1.2"/><rect x="1107" y="540" width="12" height="12" fill="#00c832"/><path d="M1108 551.5 L1118.5 540.5 M1113.5 546.5 L1118.5 551.5" stroke="#000" stroke-width="0.95"/><circle cx="1113.3" cy="546.3" r="1.8" fill="#00c832" stroke="#000" stroke-width="1"/><circle cx="1113.3" cy="546.3" r="1.8" fill="none" stroke="#fff" stroke-width="1" stroke-dasharray="1.1 1.7"/><rect x="1121" y="532" width="12" height="12" fill="#00c832"/><path d="M1127 533.5 V542.5" stroke="#000" stroke-width="1.2"/><rect x="1038" y="568" width="12" height="12" fill="#00c832"/><path d="M1039 568.5 L1049.5 579.5 M1049.5 568.5 L1039 579.5" stroke="#000" stroke-width="0.95"/><circle cx="1044.3" cy="574.3" r="1.8" fill="#00c832" stroke="#000" stroke-width="1"/><circle cx="1044.3" cy="574.3" r="1.8" fill="none" stroke="#fff" stroke-width="1" stroke-dasharray="1.1 1.7"/><rect x="1052" y="603" width="12" height="12" fill="#00c832"/><path d="M1058 604.5 V613.5" stroke="#000" stroke-width="1.2"/><rect x="1150" y="596" width="12" height="12" fill="#00c832"/><path d="M1156 597.5 V606.5" stroke="#000" stroke-width="1.2"/><rect x="716" y="715" width="12" height="12" fill="#00c832"/><path d="M717 726.5 L727.5 715.5 M722.5 721.5 L727.5 726.5" stroke="#000" stroke-width="0.95"/><circle cx="722.3" cy="721.3" r="1.8" fill="#00c832" stroke="#000" stroke-width="1"/><circle cx="722.3" cy="721.3" r="1.8" fill="none" stroke="#fff" stroke-width="1" stroke-dasharray="1.1 1.7"/><rect x="957" y="715" width="12" height="12" fill="#00c832"/><path d="M958.5 721 H967.5" stroke="#000" stroke-width="1.2"/>
</svg>

<!-- ===== HEADS-UP TOOLBAR ===== -->
<svg style="left:737px;top:145px" width="19" height="19" viewBox="0 0 19 19">
 <circle cx="12" cy="7" r="5.8" fill="#dfe3ea" stroke="#6a6a6a" stroke-width="1.1"/>
 <path d="M12 2.5 L10.5 4.3 H13.5 Z M12 11.5 L10.5 9.7 H13.5 Z M7.5 7 L9.3 5.5 V8.5 Z M16.5 7 L14.7 5.5 V8.5 Z" fill="#333"/>
 <path d="M8 11 L1.5 17.5" stroke="#3d8fc0" stroke-width="2.6" stroke-linecap="round"/>
</svg>
<svg style="left:763px;top:145px" width="20" height="19" viewBox="0 0 20 19">
 <rect x="7" y="0.5" width="12" height="11" fill="none" stroke="#333" stroke-width="1" stroke-dasharray="2 1.5"/>
 <circle cx="11.5" cy="7.5" r="5" fill="#e6e9ee" stroke="#777" stroke-width="1"/>
 <path d="M7.5 11 L1.5 17" stroke="#3d8fc0" stroke-width="2.6" stroke-linecap="round"/>
</svg>
<svg style="left:789px;top:145px" width="20" height="19" viewBox="0 0 20 19">
 <path d="M2 12 L13 3 L17 7 L7 16 Z" fill="#e8e8e8" stroke="#666" stroke-width="1"/>
 <ellipse cx="4.5" cy="14" rx="2.5" ry="3" transform="rotate(45 4.5 14)" fill="#cfcfcf" stroke="#666" stroke-width="0.9"/>
 <path d="M12 3 L16 1 L19 4 L17 7" fill="#ddd" stroke="#666" stroke-width="0.9"/>
 <path d="M10 14.5 H19 M10 14.5 L13 12 M10 14.5 L13 17" stroke="#2f7fb6" stroke-width="2"/>
</svg>
<svg style="left:815px;top:145px" width="20" height="19" viewBox="0 0 20 19">
 <path d="M1 4 C1 1 19 1 19 4 V15 C19 18 1 18 1 15 Z" fill="#e6e6e6" stroke="#555" stroke-width="0.9"/>
 <path d="M1 4 V15 C1 16.5 3 17.3 6 17.6 V6 C3 5.7 1 5 1 4 Z" fill="#3f8fc0" stroke="#1f4f70" stroke-width="0.8"/>
 <path d="M19 4 V15 C19 16.5 17 17.3 14 17.6 V6 C17 5.7 19 5 19 4 Z" fill="#3f8fc0" stroke="#1f4f70" stroke-width="0.8"/>
 <path d="M2 8 L5 6 M2 11 L5 9 M2 14 L5 12 M15 8 L18 6 M15 11 L18 9 M15 14 L18 12" stroke="#bfe0f2" stroke-width="0.9"/>
</svg>
<svg style="left:840px;top:145px" width="20" height="19" viewBox="0 0 20 19">
 <path d="M3 12 L12 4 L15.5 7.5 L7.5 15 Z" fill="#e8e8e8" stroke="#666" stroke-width="1"/>
 <ellipse cx="4.5" cy="13.5" rx="2.3" ry="2.8" transform="rotate(45 4.5 13.5)" fill="#cfcfcf" stroke="#666" stroke-width="0.9"/>
 <path d="M5 0.5 H12 L9 4 H11 L4 9 L7 5 H4.5 Z" fill="#f5c518" stroke="#c24a1a" stroke-width="0.7"/>
 <text x="14.5" y="18.5" font-family="Liberation Serif" font-size="10" fill="#2f7fb6">A</text>
</svg>
<svg style="left:867px;top:145px" width="20" height="19" viewBox="0 0 20 19">
 <path d="M1 5 L5 1 H19 V14 L15 18 H1 Z" fill="#f0f0f0" stroke="#444" stroke-width="0.9"/>
 <rect x="1" y="5" width="14" height="13" fill="#7fbfe0" stroke="#444" stroke-width="0.9"/>
 <path d="M15 5 L19 1" stroke="#444" stroke-width="0.9"/>
 <path d="M12 2 V4.5 M11 3.5 L12 4.5 L13 3.5 M16.5 11 H18.5 M17.5 10 L16.5 11 L17.5 12" stroke="#333" stroke-width="0.7" fill="none"/>
</svg>
<div class="dd" style="left:893px;top:152px;border-top-color:#8a8a8a"></div>
<svg style="left:909px;top:145px" width="17" height="19" viewBox="0 0 17 19">
 <path d="M1 4 L6 1 L16 2.5 V14.5 L10.5 18 L1 16 Z" fill="#f4f4f4" stroke="#555" stroke-width="0.9"/>
 <path d="M1 4 L10.5 5.5 V18 L1 16 Z" fill="#6fb0d8"/>
 <path d="M1 4 L10.5 5.5 L16 2.5 M10.5 5.5 V18" fill="none" stroke="#555" stroke-width="0.9"/>
 <path d="M2.5 6 L6 6.5 V15.5 L2.5 15 Z" fill="#bfe2f4"/>
</svg>
<div class="dd" style="left:933px;top:152px;border-top-color:#8a8a8a"></div>
<svg style="left:948px;top:147px" width="18" height="15" viewBox="0 0 18 15">
 <path d="M0.5 7.5 C4 2 14 2 17.5 7.5 C14 13 4 13 0.5 7.5 Z" fill="#d8dadf" stroke="#6a6a6a" stroke-width="0.9"/>
 <circle cx="9" cy="7.5" r="3.8" fill="#555"/>
 <path d="M9 0 V15" stroke="#444" stroke-width="1.3"/>
</svg>
<div class="dd" style="left:973px;top:152px;border-top-color:#8a8a8a"></div>
<svg style="left:987px;top:144px" width="20" height="20" viewBox="0 0 20 20">
 <circle cx="8.5" cy="8" r="7.2" fill="#b5b9c0"/><circle cx="7" cy="6" r="3.5" fill="#c9ccd2"/>
 <path d="M9 19 L10.5 14 L17.5 7 L19.5 9 L12.5 16 Z" fill="#c2c5cb" stroke="#a6a9b0" stroke-width="1.1"/>
</svg>
<svg style="left:1013px;top:144px" width="19" height="20" viewBox="0 0 19 20">
 <defs><clipPath id="cp2"><circle cx="9.5" cy="8" r="7.5"/></clipPath></defs>
 <g clip-path="url(#cp2)"><rect width="19" height="19" fill="#e8c020"/><path d="M9.5 8 L9.5 0 H19 V10 Z" fill="#d82020"/><path d="M9.5 8 V0 H0 V8 Z" fill="#2a6ad0"/><path d="M9.5 8 H0 V19 H9.5 Z" fill="#20a030"/></g>
 <rect x="0.5" y="12" width="18" height="7.5" fill="#111"/>
 <rect x="2" y="13.5" width="3" height="2.5" fill="#fff"/><rect x="8" y="13.5" width="3" height="2.5" fill="#fff"/><rect x="14" y="13.5" width="3" height="2.5" fill="#fff"/>
 <rect x="5" y="16.5" width="3" height="2.5" fill="#fff"/><rect x="11" y="16.5" width="3" height="2.5" fill="#fff"/>
</svg>
<div class="dd" style="left:1039px;top:152px;border-top-color:#8a8a8a"></div>
<svg style="left:1054px;top:146px" width="18" height="16" viewBox="0 0 18 16">
 <rect x="0.5" y="0.5" width="17" height="11" fill="#e0e0e0" stroke="#444" stroke-width="1"/>
 <path d="M9 12 V14 M5.5 14.8 H12.5" stroke="#222" stroke-width="1.5"/>
</svg>
<div class="dd" style="left:1079px;top:152px;border-top-color:#8a8a8a"></div>

<!-- ===== TASK PANE TABS ===== -->
<div class="a" style="left:1574px;top:168px;width:26px;height:168px;background:#d4d4d4;border:1px solid #8a8a8a;border-right:none"></div>
<div class="a" style="left:1575px;top:169px;width:25px;height:23px;background:#f7f7f7"></div>
<div class="a" style="left:1575px;top:192px;width:25px;height:1px;background:#8a8a8a"></div>
<div class="a" style="left:1575px;top:216px;width:25px;height:1px;background:#8a8a8a"></div>
<div class="a" style="left:1575px;top:240px;width:25px;height:1px;background:#8a8a8a"></div>
<div class="a" style="left:1575px;top:264px;width:25px;height:1px;background:#8a8a8a"></div>
<div class="a" style="left:1575px;top:288px;width:25px;height:1px;background:#8a8a8a"></div>
<div class="a" style="left:1575px;top:311px;width:25px;height:1px;background:#8a8a8a"></div>
<svg style="left:1577px;top:170px" width="20" height="20" viewBox="0 0 20 20">
 <circle cx="10" cy="10" r="9.5" fill="#0e4a78"/>
 <circle cx="10" cy="8" r="6" fill="#3d8cc4" opacity="0.55"/>
 <path d="M8.5 7 L12.5 10 L8.5 13 Z" fill="none" stroke="#cfe6f6" stroke-width="0.9"/>
</svg>
<svg style="left:1578px;top:195px" width="18" height="18" viewBox="0 0 18 18">
 <path d="M1 9 L9 1.5 L17 9" fill="none" stroke="#2d6b93" stroke-width="2.2"/>
 <path d="M3 8 V17 H15 V8" fill="#fafafa" stroke="#222" stroke-width="1.2"/>
 <rect x="7.5" y="11" width="3.5" height="6" fill="none" stroke="#222" stroke-width="1"/>
</svg>
<svg style="left:1579px;top:218px" width="16" height="19" viewBox="0 0 16 19">
 <path d="M1 3 L4 1.5 V17.5 L1 16 Z M5 3 L8 1.5 V17.5 L5 16 Z M9 3 L12 1.5 L15 3 V17 L12 17.5 L9 16 Z" fill="#f0f0f0" stroke="#222" stroke-width="0.9"/>
</svg>
<svg style="left:1577px;top:243px" width="20" height="17" viewBox="0 0 20 17">
 <path d="M1 1.5 H7 L8.5 3 H15 V6 H4 L1 15.5 Z" fill="#e8e8e8" stroke="#222" stroke-width="1"/>
 <path d="M4 6 H19 L16 15.5 H1 Z" fill="#f6f6f6" stroke="#222" stroke-width="1"/>
</svg>
<svg style="left:1578px;top:267px" width="17" height="17" viewBox="0 0 17 17">
 <rect x="0.6" y="0.6" width="15.8" height="15.8" rx="1" fill="#fafafa" stroke="#222" stroke-width="1"/>
 <path d="M3 3 H10 V6 H7.5 V11 H11 V13.5 H3 V11 H6 V6 H3 Z" fill="#f0c020" stroke="#8a6a10" stroke-width="0.6"/>
 <rect x="11.5" y="3" width="3" height="3" fill="#f0c020"/><rect x="12" y="8" width="2.5" height="6" fill="#ddd" stroke="#666" stroke-width="0.5"/>
</svg>
<svg style="left:1578px;top:290px" width="18" height="18" viewBox="0 0 18 18">
 <defs><clipPath id="cp3"><circle cx="9" cy="9" r="8"/></clipPath></defs>
 <g clip-path="url(#cp3)"><rect width="18" height="18" fill="#e8c020"/><path d="M9 9 L3 0 H18 V9 Z" fill="#d82020"/><path d="M9 9 L3 0 H0 V10 Z" fill="#2a6ad0"/><path d="M9 9 L0 10 V18 H9 Z" fill="#20a030"/></g>
</svg>
<svg style="left:1578px;top:315px" width="18" height="18" viewBox="0 0 18 18">
 <rect x="0.6" y="0.6" width="16.8" height="16.8" rx="1.3" fill="#f6f6f6" stroke="#222" stroke-width="1.1"/>
 <rect x="1" y="1" width="16" height="2.6" fill="#2f7fb6"/>
 <rect x="2.8" y="5.8" width="3.6" height="2" fill="#1c5a86"/><rect x="2.8" y="9.5" width="3.6" height="2" fill="#1c5a86"/><rect x="2.8" y="13.2" width="3.6" height="2" fill="#1c5a86"/>
 <path d="M8 6.8 H15 M8 10.5 H15 M8 14.2 H15" stroke="#222" stroke-width="1"/>
</svg>

<!-- confirmation corner (faded) -->
<svg style="left:0;top:0" width="1600" height="300" viewBox="0 0 1600 300">
 <path d="M1519 174.5 H1497.5 V192 C1497.5 196 1499.5 198 1503 198 H1514" fill="none" stroke="#a9bccc" stroke-width="2.2"/>
 <path d="M1518.5 197.5 L1527 189 L1526.5 193.5 C1532.5 193.5 1537.5 191.5 1541.5 187.5 C1540.5 196 1534 200.5 1527 201 L1527.5 206.5 Z" fill="#a9bccc"/>
 <path d="M1544 206.5 L1565 227 M1565 206.5 L1544 227" stroke="#d29ea7" stroke-width="5.5" stroke-linecap="butt"/>
</svg>
<!-- triad -->
<svg style="left:0;top:700px" width="330" height="90" viewBox="0 700 330 90">
 <path d="M268 767 V746 H272 V767 Z" fill="#6fb06f" stroke="#1f7a1f" stroke-width="1"/>
 <path d="M270 738 L266 747 H274 Z" fill="#1f7a1f"/>
 <path d="M272 765.5 H292 V769.5 H272 Z" fill="#e87575" stroke="#c01818" stroke-width="1"/>
 <path d="M300 767.5 L291.5 763.5 V771.5 Z" fill="#c01818"/>
 <circle cx="270" cy="767.5" r="4.3" fill="#151a78"/>
 <path d="M266.5 727 L270 731 L273.5 727 M270 731 V736" fill="none" stroke="#1f9a1f" stroke-width="1"/>
 <path d="M302.5 763.5 L306 771.5 M306 763.5 L302.5 771.5" stroke="#ff1010" stroke-width="1"/>
</svg>

<!-- ===== BOTTOM TABS ===== -->
<div class="a" style="left:0;top:826px;width:6px;height:15px;background:#a0c0c8"></div>
<div class="a" style="left:2px;top:826px;width:64px;height:15px;background:#a9a9a9;border-top:1px solid #222"></div>
<svg style="left:2px;top:826px" width="64" height="15" viewBox="0 0 64 15">
 <path d="M16 1 V15 M32 1 V15 M48 1 V15" stroke="#c8c8c8" stroke-width="1"/>
 <path d="M6 4 V12 M12 4 L7 8 L12 12 Z M28 4 L23 8 L28 12 Z M37 4 L42 8 L37 12 Z M53 4 L58 8 L53 12 Z M59 4 V12" stroke="#8e8e8e" fill="#8e8e8e" stroke-width="1"/>
</svg>
<div class="a" style="left:66px;top:826px;width:65px;height:15px;background:#fafafa"></div>
<div class="a" style="left:130px;top:827px;width:63px;height:14px;background:#d4d4d4;border:1px solid #8a8a8a;border-top:none;border-bottom:none"></div>
<div class="a" style="left:192px;top:827px;width:155px;height:14px;background:#d4d4d4;border:1px solid #8a8a8a;border-top:none;border-bottom:none"></div>

<!-- ===== STATUS BAR ===== -->
<svg style="left:1347px;top:845px" width="9" height="13" viewBox="0 0 9 13"><rect x="0.5" y="0.5" width="8" height="12" rx="3.5" fill="#1d1d1d"/><circle cx="4.5" cy="4" r="2" fill="#d82828"/><circle cx="4.5" cy="9.2" r="2" fill="#28a038"/></svg>
<div class="a" style="left:1361px;top:843px;width:1px;height:16px;background:#d8d8d8"></div>
<svg style="left:1366px;top:844px" width="18" height="16" viewBox="0 0 18 16">
 <path d="M6 1 L11 10 H1 Z" fill="#f5c518" stroke="#b07010" stroke-width="0.8"/>
 <path d="M6 4 V7 M6 8.3 V9" stroke="#222" stroke-width="1"/>
 <path d="M9 7 L15 2 M12 1.5 H15.5 V5" fill="none" stroke="#222" stroke-width="1.3"/>
 <rect x="1" y="13" width="2.5" height="3" fill="#1f5a82"/><rect x="5" y="12" width="2.5" height="4" fill="#1f5a82"/><rect x="9" y="10" width="2.5" height="6" fill="#1f5a82"/><rect x="13" y="8" width="2.5" height="8" fill="#1f5a82"/>
</svg>
<svg style="left:1547px;top:850px" width="8" height="5"><path d="M0 4.5 L4 0.5 L8 4.5 Z" fill="#333"/></svg>
<svg style="left:1580px;top:844px" width="18" height="16" viewBox="0 0 18 16">
 <path d="M1 6 L6 1.5 L17 6.5 L12 12 Z" fill="#f4f4f4" stroke="#444" stroke-width="1"/>
 <path d="M1 6 V9 L12 15 V12 M12 15 L17 9.5 V6.5" fill="#e0e0e0" stroke="#444" stroke-width="1"/>
 <circle cx="8" cy="5" r="1.8" fill="none" stroke="#444" stroke-width="0.9"/><path d="M11 7 L14 8.5" stroke="#444" stroke-width="1"/>
</svg>

<!--TEXT-->
<div class="a" style="left:813.00px;top:13px;font-size:11.0px;line-height:11.0px;letter-spacing:-0.053px;white-space:nowrap;font-weight:normal;color:#111;-webkit-text-stroke:0.2px #111;">Esquisse1 de Pièce2 *</div>
<div class="a" style="left:1158.00px;top:12px;font-size:10.5px;line-height:10.5px;letter-spacing:-0.438px;white-space:nowrap;font-weight:normal;color:#6e6e78;-webkit-text-stroke:0.2px #6e6e78;">MASSE</div>
<div class="a" style="left:15.50px;top:62px;font-size:11.75px;line-height:11.75px;letter-spacing:0.042px;white-space:nowrap;font-weight:normal;color:#000;-webkit-text-stroke:0.2px #000;">Quitter</div>
<div class="a" style="left:11.00px;top:75px;font-size:11.75px;line-height:11.75px;letter-spacing:-0.023px;white-space:nowrap;font-weight:normal;color:#000;-webkit-text-stroke:0.2px #000;">l&#x27;esqui...</div>
<div class="a" style="left:72.50px;top:62px;font-size:11.75px;line-height:11.75px;letter-spacing:0.019px;white-space:nowrap;font-weight:normal;color:#000;-webkit-text-stroke:0.2px #000;">Cotation</div>
<div class="a" style="left:65.70px;top:75px;font-size:12.0px;line-height:12.0px;letter-spacing:0.076px;white-space:nowrap;font-weight:normal;color:#000;-webkit-text-stroke:0.2px #000;">intelligente</div>
<div class="a" style="left:286.00px;top:63px;font-size:11.25px;line-height:11.25px;letter-spacing:0.016px;white-space:nowrap;font-weight:normal;color:#000;-webkit-text-stroke:0.2px #000;">Ajuster les</div>
<div class="a" style="left:295.70px;top:76px;font-size:11.5px;line-height:11.5px;letter-spacing:-0.028px;white-space:nowrap;font-weight:normal;color:#000;-webkit-text-stroke:0.2px #000;">entités</div>
<div class="a" style="left:351.50px;top:63px;font-size:11.5px;line-height:11.5px;letter-spacing:-0.017px;white-space:nowrap;font-weight:normal;color:#000;-webkit-text-stroke:0.2px #000;">Convertir</div>
<div class="a" style="left:349.00px;top:76px;font-size:11.5px;line-height:11.5px;letter-spacing:-0.011px;white-space:nowrap;font-weight:normal;color:#000;-webkit-text-stroke:0.2px #000;">les entités</div>
<div class="a" style="left:411.50px;top:63px;font-size:11.0px;line-height:11.0px;letter-spacing:-0.066px;white-space:nowrap;font-weight:normal;color:#000;-webkit-text-stroke:0.2px #000;">Décaler</div>
<div class="a" style="left:423.50px;top:76px;font-size:11.0px;line-height:11.0px;letter-spacing:-0.690px;white-space:nowrap;font-weight:normal;color:#000;-webkit-text-stroke:0.2px #000;">les</div>
<div class="a" style="left:412.70px;top:89px;font-size:11.5px;line-height:11.5px;letter-spacing:0.022px;white-space:nowrap;font-weight:normal;color:#000;-webkit-text-stroke:0.2px #000;">entités</div>
<div class="a" style="left:459.50px;top:63px;font-size:11.0px;line-height:11.0px;letter-spacing:-0.039px;white-space:nowrap;font-weight:normal;color:#b9b9b9;-webkit-text-stroke:0.2px #b9b9b9;">Décalage</div>
<div class="a" style="left:468.50px;top:76px;font-size:11.0px;line-height:11.0px;letter-spacing:0.010px;white-space:nowrap;font-weight:normal;color:#b9b9b9;-webkit-text-stroke:0.2px #b9b9b9;">sur la</div>
<div class="a" style="left:464.70px;top:89px;font-size:11.0px;line-height:11.0px;letter-spacing:-0.080px;white-space:nowrap;font-weight:normal;color:#b9b9b9;-webkit-text-stroke:0.2px #b9b9b9;">surface</div>
<div class="a" style="left:539.50px;top:44px;font-size:11.0px;line-height:11.0px;letter-spacing:0.026px;white-space:nowrap;font-weight:normal;color:#000;-webkit-text-stroke:0.2px #000;">Symétriser les entités</div>
<div class="a" style="left:539.50px;top:69px;font-size:11.75px;line-height:11.75px;letter-spacing:-0.033px;white-space:nowrap;font-weight:normal;color:#000;-webkit-text-stroke:0.2px #000;">Répétition linéaire d&#x27;esquisse</div>
<div class="a" style="left:539.50px;top:96px;font-size:11.25px;line-height:11.25px;letter-spacing:0.012px;white-space:nowrap;font-weight:normal;color:#000;-webkit-text-stroke:0.2px #000;">Déplacer les entités</div>
<div class="a" style="left:737.40px;top:62px;font-size:11.75px;line-height:11.75px;letter-spacing:-0.030px;white-space:nowrap;font-weight:normal;color:#000;-webkit-text-stroke:0.2px #000;">Afficher/Supprimer</div>
<div class="a" style="left:754.00px;top:76px;font-size:11.5px;line-height:11.5px;letter-spacing:0.029px;white-space:nowrap;font-weight:normal;color:#000;-webkit-text-stroke:0.2px #000;">les relations</div>
<div class="a" style="left:849.50px;top:63px;font-size:11.0px;line-height:11.0px;letter-spacing:-0.061px;white-space:nowrap;font-weight:normal;color:#000;-webkit-text-stroke:0.2px #000;">Réparer</div>
<div class="a" style="left:844.70px;top:76px;font-size:11.25px;line-height:11.25px;letter-spacing:-0.006px;white-space:nowrap;font-weight:normal;color:#000;-webkit-text-stroke:0.2px #000;">l&#x27;esquisse</div>
<div class="a" style="left:907.20px;top:62px;font-size:11.75px;line-height:11.75px;letter-spacing:-0.056px;white-space:nowrap;font-weight:normal;color:#000;-webkit-text-stroke:0.2px #000;">Aimantations</div>
<div class="a" style="left:908.40px;top:76px;font-size:11.5px;line-height:11.5px;letter-spacing:-0.019px;white-space:nowrap;font-weight:normal;color:#000;-webkit-text-stroke:0.2px #000;">instantanées</div>
<div class="a" style="left:988.60px;top:63px;font-size:11.0px;line-height:11.0px;letter-spacing:-0.216px;white-space:nowrap;font-weight:normal;color:#000;-webkit-text-stroke:0.2px #000;">Esquisse</div>
<div class="a" style="left:993.60px;top:76px;font-size:11.5px;line-height:11.5px;letter-spacing:0.066px;white-space:nowrap;font-weight:normal;color:#000;-webkit-text-stroke:0.2px #000;">rapide</div>
<div class="a" style="left:1042.40px;top:63px;font-size:11.5px;line-height:11.5px;letter-spacing:0.016px;white-space:nowrap;font-weight:normal;color:#000;-webkit-text-stroke:0.2px #000;">Instant2D</div>
<div class="a" style="left:1105.50px;top:63px;font-size:11.5px;line-height:11.5px;letter-spacing:0.030px;white-space:nowrap;font-weight:normal;color:#000;-webkit-text-stroke:0.2px #000;">Contours</div>
<div class="a" style="left:1102.75px;top:76px;font-size:11.25px;line-height:11.25px;letter-spacing:0.020px;white-space:nowrap;font-weight:normal;color:#000;-webkit-text-stroke:0.2px #000;">d&#x27;esquisse</div>
<div class="a" style="left:1110.75px;top:89px;font-size:11.0px;line-height:11.0px;letter-spacing:0.033px;white-space:nowrap;font-weight:normal;color:#000;-webkit-text-stroke:0.2px #000;">ombrés</div>
<div class="a" style="left:8.50px;top:122px;font-size:12.0px;line-height:12.0px;letter-spacing:-0.065px;white-space:nowrap;font-weight:normal;color:#111;-webkit-text-stroke:0.2px #111;">Fonctions</div>
<div class="a" style="left:137.00px;top:122px;font-size:11.75px;line-height:11.75px;letter-spacing:0.009px;white-space:nowrap;font-weight:normal;color:#111;-webkit-text-stroke:0.2px #111;">Marquage</div>
<div class="a" style="left:208.00px;top:123px;font-size:11.25px;line-height:11.25px;letter-spacing:-0.023px;white-space:nowrap;font-weight:normal;color:#111;-webkit-text-stroke:0.2px #111;">Evaluer</div>
<div class="a" style="left:263.00px;top:122px;font-size:11.75px;line-height:11.75px;letter-spacing:0.018px;white-space:nowrap;font-weight:normal;color:#111;-webkit-text-stroke:0.2px #111;">Dimensions MBD</div>
<div class="a" style="left:370.00px;top:123px;font-size:11.25px;line-height:11.25px;letter-spacing:0.066px;white-space:nowrap;font-weight:normal;color:#111;-webkit-text-stroke:0.2px #111;">Compléments de SOLIDWORKS</div>
<div class="a" style="left:559.00px;top:123px;font-size:11.5px;line-height:11.5px;letter-spacing:0.085px;white-space:nowrap;font-weight:normal;color:#111;-webkit-text-stroke:0.2px #111;">MBD</div>
<div class="a" style="left:608.00px;top:123px;font-size:11.0px;line-height:11.0px;letter-spacing:-0.029px;white-space:nowrap;font-weight:normal;color:#111;-webkit-text-stroke:0.2px #111;">SOLIDWORKS CAM</div>
<div class="a" style="left:728.75px;top:123px;font-size:11.0px;line-height:11.0px;letter-spacing:0.065px;white-space:nowrap;font-weight:normal;color:#111;-webkit-text-stroke:0.2px #111;">SOLIDWORKS CAM TBM</div>
<div class="a" style="left:874.00px;top:123px;font-size:11.25px;line-height:11.25px;letter-spacing:-0.046px;white-space:nowrap;font-weight:normal;color:#111;-webkit-text-stroke:0.2px #111;">SOLIDWORKS Inspection</div>
<div class="a" style="left:76.00px;top:123px;font-size:11.0px;line-height:11.0px;letter-spacing:0.049px;white-space:nowrap;font-weight:normal;color:#0d1a2a;-webkit-text-stroke:0.2px #0d1a2a;-webkit-text-stroke:0.45px #0d1a2a">Esquisse</div>
<div class="a" style="left:50.50px;top:244px;font-size:11.0px;line-height:11.0px;letter-spacing:0.002px;white-space:nowrap;font-weight:normal;color:#111;-webkit-text-stroke:0.2px #111;">Dossier</div>
<div class="a" style="left:50.50px;top:266px;font-size:11.5px;line-height:11.5px;letter-spacing:-0.070px;white-space:nowrap;font-weight:normal;color:#111;-webkit-text-stroke:0.2px #111;">Capteurs</div>
<div class="a" style="left:50.50px;top:287px;font-size:12.0px;line-height:12.0px;letter-spacing:0.114px;white-space:nowrap;font-weight:normal;color:#111;-webkit-text-stroke:0.2px #111;">Annotations</div>
<div class="a" style="left:50.50px;top:309px;font-size:12.0px;line-height:12.0px;letter-spacing:-0.005px;white-space:nowrap;font-weight:normal;color:#111;-webkit-text-stroke:0.2px #111;">Matériau &lt;non spécifié&gt;</div>
<div class="a" style="left:50.50px;top:332px;font-size:11.5px;line-height:11.5px;letter-spacing:-0.016px;white-space:nowrap;font-weight:normal;color:#111;-webkit-text-stroke:0.2px #111;">Front Plane</div>
<div class="a" style="left:50.50px;top:354px;font-size:11.5px;line-height:11.5px;letter-spacing:0.003px;white-space:nowrap;font-weight:normal;color:#111;-webkit-text-stroke:0.2px #111;">Top Plane</div>
<div class="a" style="left:50.50px;top:376px;font-size:11.5px;line-height:11.5px;letter-spacing:-0.005px;white-space:nowrap;font-weight:normal;color:#111;-webkit-text-stroke:0.2px #111;">Right Plane</div>
<div class="a" style="left:50.50px;top:397px;font-size:11.75px;line-height:11.75px;letter-spacing:0.051px;white-space:nowrap;font-weight:normal;color:#111;-webkit-text-stroke:0.2px #111;">Origine</div>
<div class="a" style="left:50.50px;top:420px;font-size:11.0px;line-height:11.0px;letter-spacing:-0.049px;white-space:nowrap;font-weight:normal;color:#111;-webkit-text-stroke:0.2px #111;">(-) Esquisse1</div>
<div class="a" style="left:0;top:214px;width:227px;height:22px;overflow:hidden"><div class="a" style="left:27.20px;top:7px;font-size:11.75px;line-height:11.75px;letter-spacing:-0.045px;white-space:nowrap;font-weight:normal;color:#111;-webkit-text-stroke:0.2px #111;">Pièce2 (Default) &lt;&lt;Default&gt;_Display S</div></div>
<div class="a" style="left:79.70px;top:827px;font-size:12.0px;line-height:12.0px;letter-spacing:-0.068px;white-space:nowrap;font-weight:bold;color:#000;-webkit-text-stroke:0.2px #000;">Modèle</div>
<div class="a" style="left:140.40px;top:828px;font-size:11.0px;line-height:11.0px;letter-spacing:-0.117px;white-space:nowrap;font-weight:normal;color:#111;-webkit-text-stroke:0.2px #111;">Vues 3D</div>
<div class="a" style="left:204.25px;top:827px;font-size:11.75px;line-height:11.75px;letter-spacing:0.027px;white-space:nowrap;font-weight:normal;color:#111;-webkit-text-stroke:0.2px #111;">Etude de mouvement 1</div>
<div class="a" style="left:240px;top:811px;font-family:Liberation Mono;font-weight:bold;font-size:13px;line-height:13px;letter-spacing:-0.6px;color:#111">*Face</div>
<div class="a" style="left:1.00px;top:846px;font-size:11.0px;line-height:11.0px;letter-spacing:-0.006px;white-space:nowrap;font-weight:normal;color:#111;-webkit-text-stroke:0.2px #111;">SOLIDWORKS Premium 2024 SP1.0</div>
<div class="a" style="left:949.00px;top:845px;font-size:12.0px;line-height:12.0px;letter-spacing:-0.084px;white-space:nowrap;font-weight:normal;color:#111;-webkit-text-stroke:0.2px #111;">62.2mm</div>
<div class="a" style="left:1128.00px;top:845px;font-size:12.0px;line-height:12.0px;letter-spacing:-0.004px;white-space:nowrap;font-weight:normal;color:#111;-webkit-text-stroke:0.2px #111;">Sous-contrainte</div>
<div class="a" style="left:1230.40px;top:846px;font-size:11.25px;line-height:11.25px;letter-spacing:-0.055px;white-space:nowrap;font-weight:normal;color:#111;-webkit-text-stroke:0.2px #111;">Edition: Esquisse1</div>
<div class="a" style="left:1476.00px;top:846px;font-size:11.5px;line-height:11.5px;letter-spacing:0.078px;white-space:nowrap;font-weight:normal;color:#111;-webkit-text-stroke:0.2px #111;">MMGS</div>
<!--/TEXT-->
</body></html>
